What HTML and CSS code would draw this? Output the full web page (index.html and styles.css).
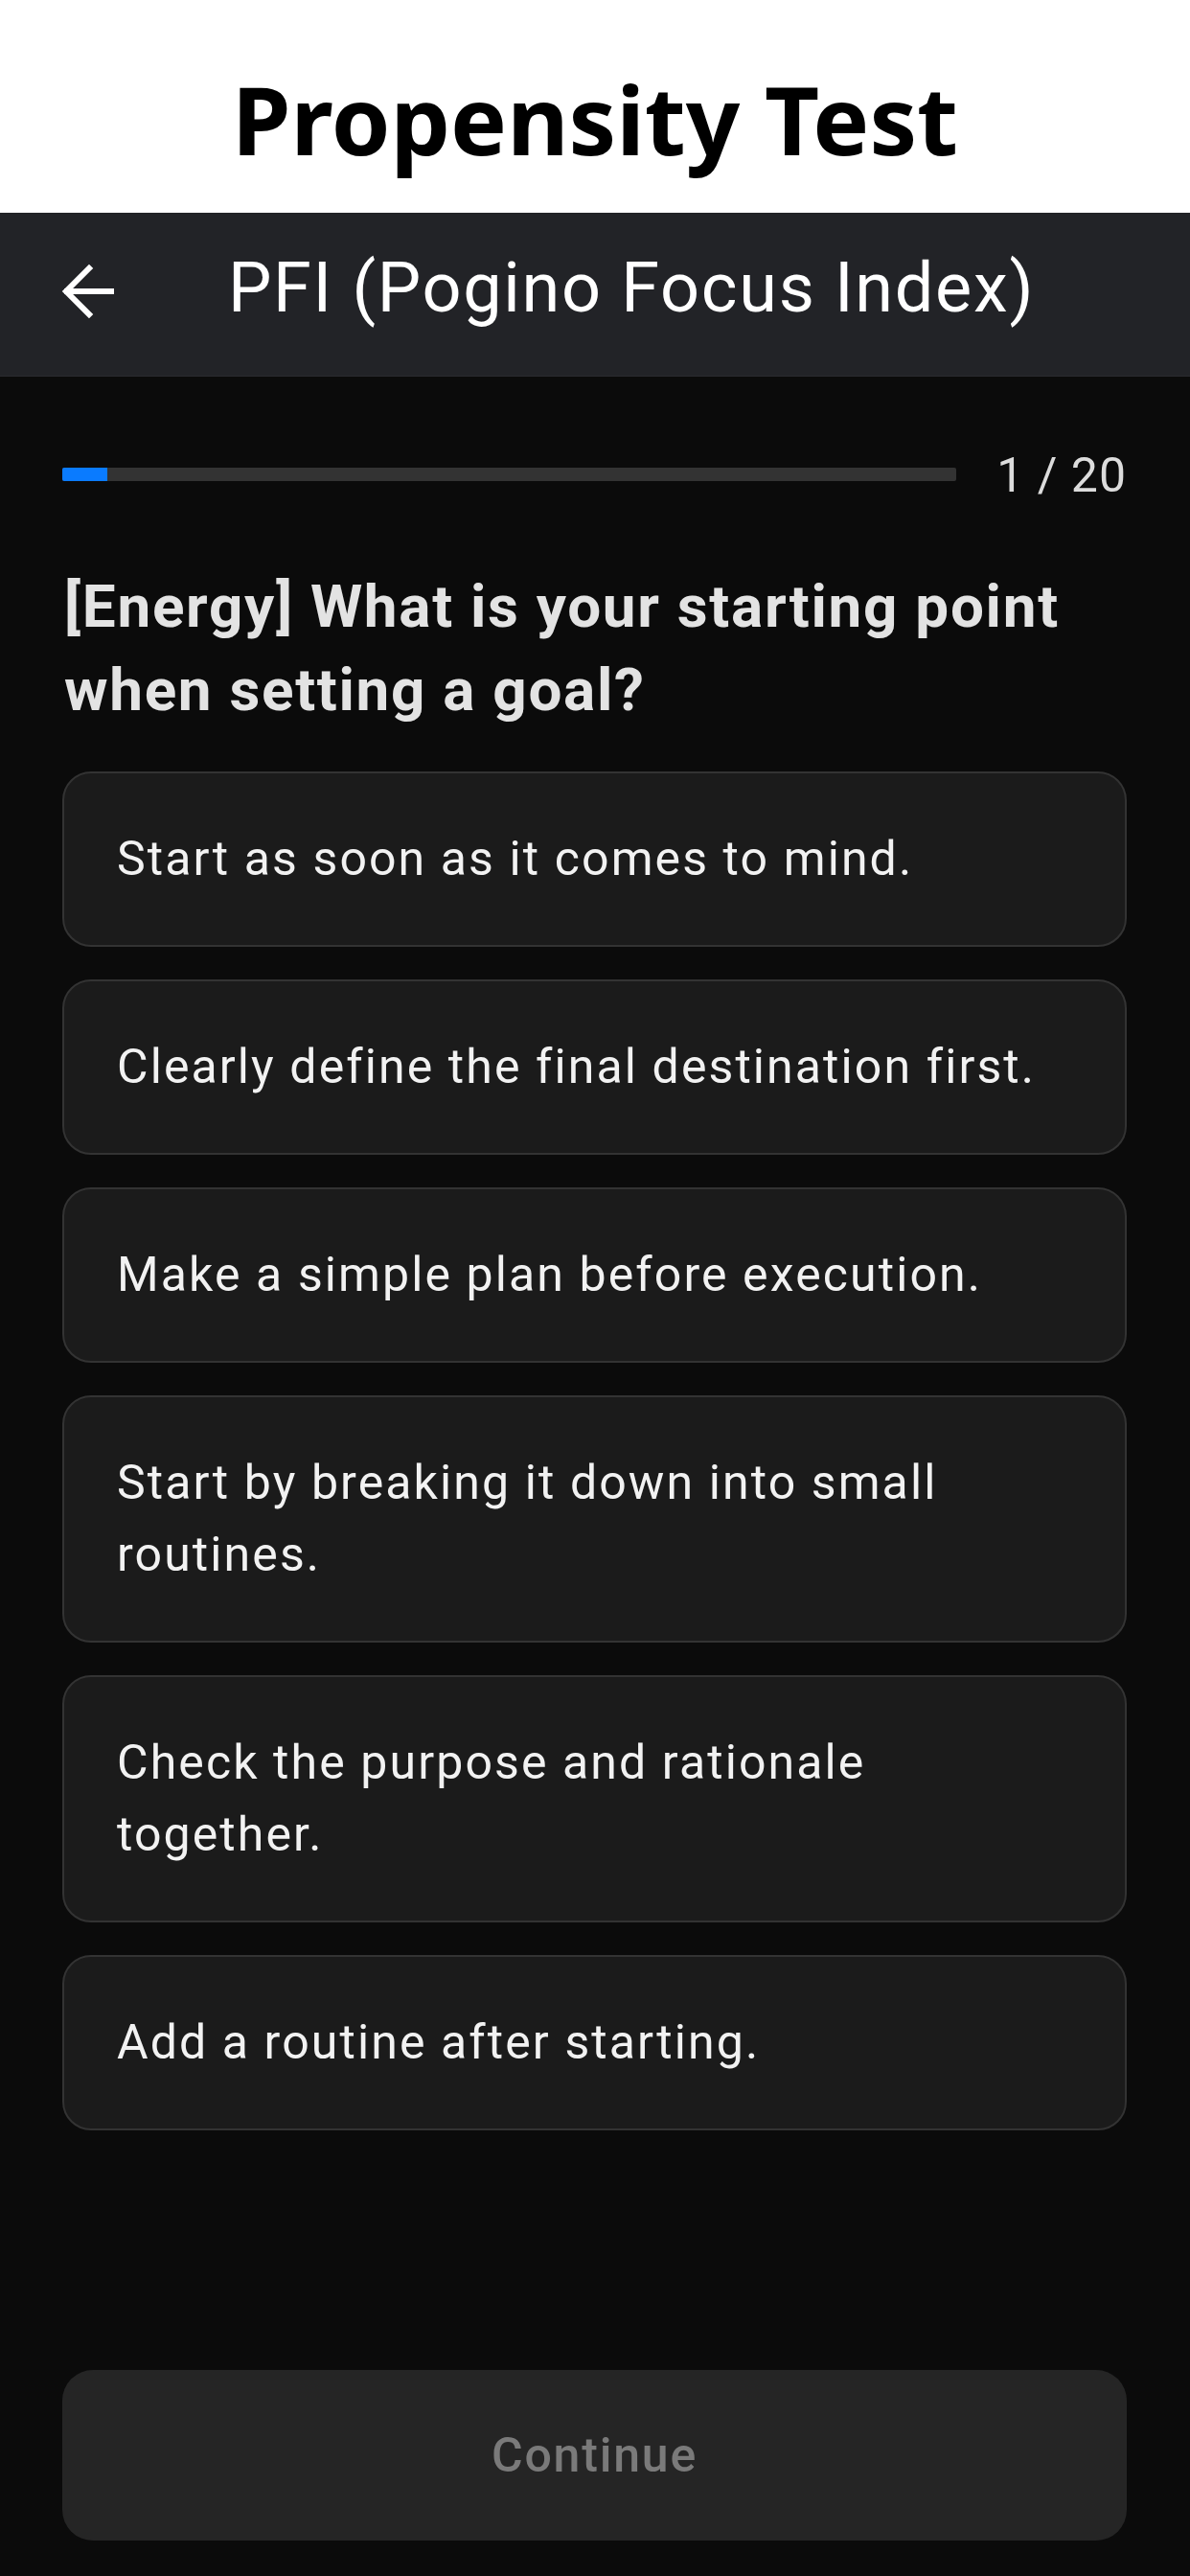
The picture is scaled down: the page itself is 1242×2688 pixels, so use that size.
FILE: index.html
```html
<!DOCTYPE html>
<html lang="en">
<head>
<meta charset="utf-8">
<title>Propensity Test</title>
<link rel="stylesheet" href="styles.css">
</head>
<body>
<div class="page">
  <header class="banner">
    <h1 class="banner-title">Propensity Test</h1>
  </header>
  <nav class="appbar">
    <button class="back" aria-label="Back">
      <svg width="60" height="60" viewBox="0 0 60 60" aria-hidden="true">
        <path d="M56 30 H10 M33 6 L9 30 L33 54" fill="none" stroke="#ffffff" stroke-width="6" stroke-linecap="square" stroke-linejoin="miter"/>
      </svg>
    </button>
    <div class="appbar-title">PFI (Pogino Focus Index)</div>
  </nav>
  <main class="content">
    <div class="progress-row">
      <div class="track"><div class="fill" style="width:5%"></div></div>
      <div class="count">1 / 20</div>
    </div>
    <h2 class="question">[Energy] What is your starting point when setting a goal?</h2>
    <ul class="options">
      <li class="option">Start as soon as it comes to mind.</li>
      <li class="option">Clearly define the final destination first.</li>
      <li class="option">Make a simple plan before execution.</li>
      <li class="option">Start by breaking it down into small routines.</li>
      <li class="option">Check the purpose and rationale together.</li>
      <li class="option">Add a routine after starting.</li>
    </ul>
    <button class="continue" disabled>Continue</button>
  </main>
</div>
</body>
</html>
```
FILE: styles.css
```css
* { box-sizing: border-box; }
html, body { margin: 0; padding: 0; }
body {
  background: #0b0b0b;
  font-family: Roboto, "Liberation Sans", sans-serif;
}
.page {
  min-height: 2688px;
  display: flex;
  flex-direction: column;
}
.banner {
  background: #ffffff;
  height: 222px;
  display: flex;
  align-items: center;
  justify-content: center;
}
.banner-title {
  margin: 0;
  font-family: "Noto Sans", "Open Sans", sans-serif;
  font-weight: 700;
  font-size: 99px;
  line-height: 1;
  color: #000000;
  padding-top: 24px;
}
.appbar {
  background: #222327;
  height: 171px;
  display: flex;
  align-items: center;
  padding-left: 60px;
  border-bottom: 1px solid #2a2b2f;
}
.back {
  background: none;
  border: 0;
  padding: 0;
  width: 60px;
  height: 60px;
  display: flex;
  margin-top: -6px;
}
.appbar-title {
  margin-left: 118px;
  color: #ffffff;
  font-size: 72px;
  font-weight: 400;
  letter-spacing: 1.7px;
  line-height: 1;
  padding-bottom: 12px;
}
.content {
  flex: 1;
  display: flex;
  flex-direction: column;
  padding: 75px 66px 37px 65px;
}
.progress-row {
  display: flex;
  align-items: center;
  gap: 42px;
  height: 56px;
}
.track {
  flex: 1;
  height: 14px;
  background: #333333;
  border-radius: 2px;
  overflow: hidden;
  margin-top: -3px;
}
.fill {
  height: 100%;
  background: #0a7bff;
}
.count {
  color: #dcdcdc;
  font-size: 50px;
  letter-spacing: 1px;
  line-height: 56px;
}
.question {
  margin: 65px 0 0 2px;
  color: #e3e3e3;
  font-size: 62px;
  font-weight: 700;
  letter-spacing: 1.7px;
  line-height: 87px;
}
.options {
  list-style: none;
  margin: 42px 0 0;
  padding: 0;
  display: flex;
  flex-direction: column;
  gap: 34px;
}
.option {
  background: #1b1b1b;
  border: 2px solid #333333;
  border-radius: 30px;
  padding: 52px 60px 52px 55px;
  color: #f2f2f2;
  font-size: 50px;
  letter-spacing: 2.1px;
  line-height: 75px;
}
.continue {
  margin-top: auto;
  height: 178px;
  width: 100%;
  background: #252525;
  border: 0;
  border-radius: 32px;
  color: #7a7a7a;
  font-family: Roboto, "Liberation Sans", sans-serif;
  font-size: 50px;
  font-weight: 500;
  letter-spacing: 1.8px;
}
```
